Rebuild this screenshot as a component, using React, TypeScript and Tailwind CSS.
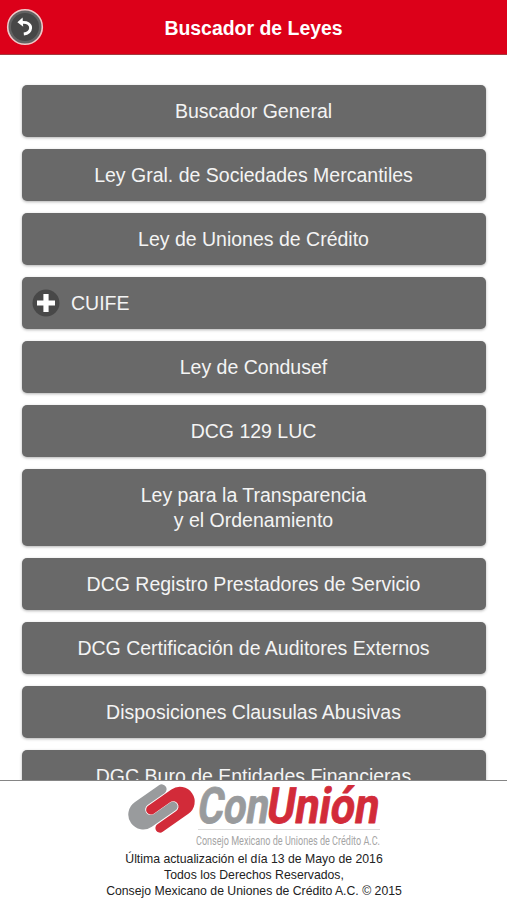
import type { ReactNode } from 'react';

const laws: { label: ReactNode; expandable?: boolean }[] = [
  { label: 'Buscador General' },
  { label: 'Ley Gral. de Sociedades Mercantiles' },
  { label: 'Ley de Uniones de Crédito' },
  { label: 'CUIFE', expandable: true },
  { label: 'Ley de Condusef' },
  { label: 'DCG 129 LUC' },
  { label: <>Ley para la Transparencia<br />y el Ordenamiento</> },
  { label: 'DCG Registro Prestadores de Servicio' },
  { label: 'DCG Certificación de Auditores Externos' },
  { label: 'Disposiciones Clausulas Abusivas' },
  { label: 'DGC Buro de Entidades Financieras' },
];

function BackIcon() {
  return (
    <svg className="h-[38px] w-[38px]" viewBox="0 0 38 38">
      <circle cx="19" cy="19" r="17.3" fill="#626262" stroke="#f0c8c8" strokeWidth="1.6" />
      <circle cx="19" cy="19" r="14" fill="#474747" />
      <path d="M15 14.6C21.5 13.6 24.9 16.4 24.6 20.2C24.3 23.7 21.8 25.6 17.8 26" fill="none" stroke="#fff" strokeWidth="2.9" />
      <path d="M11.4 14.2L16.6 9.6L17.2 18.8Z" fill="#fff" />
    </svg>
  );
}

function PlusIcon() {
  return (
    <svg className="h-7 w-7" viewBox="0 0 28 28">
      <circle cx="14" cy="14" r="13.5" fill="#484848" />
      <path d="M14 5v18M5 14h18" stroke="#fff" strokeWidth="5.2" />
    </svg>
  );
}

function Logo() {
  return (
    <svg className="h-[68px] w-[260px]" viewBox="124 781 260 68">
      <g transform="translate(124 780) scale(0.3333) rotate(-35)">
        <path
          d="M77 73A14.5 14.5 0 0 1 77 102H15A16 16 0 0 0 15 135H75A14 14 0 0 1 75 163H-12A45 45 0 0 1 -12 73Z"
          fill="#999b9d"
        />
        <path
          d="M15 105H100A44.5 44.5 0 0 1 100 194H6A14 14 0 0 1 6 166H75A16 16 0 0 0 75 134H15A14.5 14.5 0 0 1 15 105Z"
          fill="#d22b39"
        />
      </g>
      <g
        transform="translate(0 822.5) skewX(-9)"
        fontFamily="Roboto, sans-serif"
        fontWeight="700"
        fontSize="50"
        strokeWidth="0.8"
        strokeLinejoin="round"
      >
        <text x="196" y="0" textLength="71" lengthAdjust="spacingAndGlyphs" fill="#999b9d" stroke="#999b9d">Con</text>
        <text x="265" y="0" textLength="112" lengthAdjust="spacingAndGlyphs" fill="#d22b39" stroke="#d22b39">Unión</text>
      </g>
      <path d="M198 829.5H380" stroke="#dcdcdc" />
      <text x="196" y="845" fontFamily="Roboto, sans-serif" fontSize="12.5" textLength="184" lengthAdjust="spacingAndGlyphs" fill="#a5a5a5">
        Consejo Mexicano de Uniones de Crédito A.C.
      </text>
    </svg>
  );
}

export default function App() {
  return (
    <div className="flex h-[900px] w-full flex-col overflow-hidden bg-white font-['Liberation_Sans',Arial,sans-serif]">
      <header className="grid h-[55px] shrink-0 grid-cols-[48px_1fr_48px] items-center border-b border-[#a33a3f] bg-[#dc0019]">
        <div className="pl-1.5">
          <BackIcon />
        </div>
        <h1 className="pt-1 text-center text-[19.45px] font-bold text-white">Buscador de Leyes</h1>
      </header>
      <main className="flex min-h-0 flex-1 flex-col gap-3 overflow-hidden pl-[22px] pr-[21px] pt-[30px]">
        {laws.map((law, i) => (
          <button
            key={i}
            className={`flex min-h-[52px] shrink-0 items-center rounded-[5px] bg-[#696969] text-[19.5px] leading-[25px] text-[#f4f4f4] shadow-[0_1px_3px_rgba(0,0,0,0.3)] ${law.expandable ? 'gap-[11px] pl-2.5' : 'justify-center pb-3 pt-[13px] pr-px'} ${i === 6 ? 'h-[76.5px]' : 'h-[52px]'}`}
          >
            {law.expandable && <PlusIcon />}
            <span>{law.label}</span>
          </button>
        ))}
      </main>
      <footer className="flex h-[120px] shrink-0 flex-col items-center border-t border-[#858585] bg-white">
        <Logo />
        <p className="mt-0.5 pl-px text-center text-[12.25px] leading-4 text-[#222]">
          Última actualización el día 13 de Mayo de 2016
          <br />
          Todos los Derechos Reservados,
          <br />
          Consejo Mexicano de Uniones de Crédito A.C. © 2015
        </p>
      </footer>
    </div>
  );
}
